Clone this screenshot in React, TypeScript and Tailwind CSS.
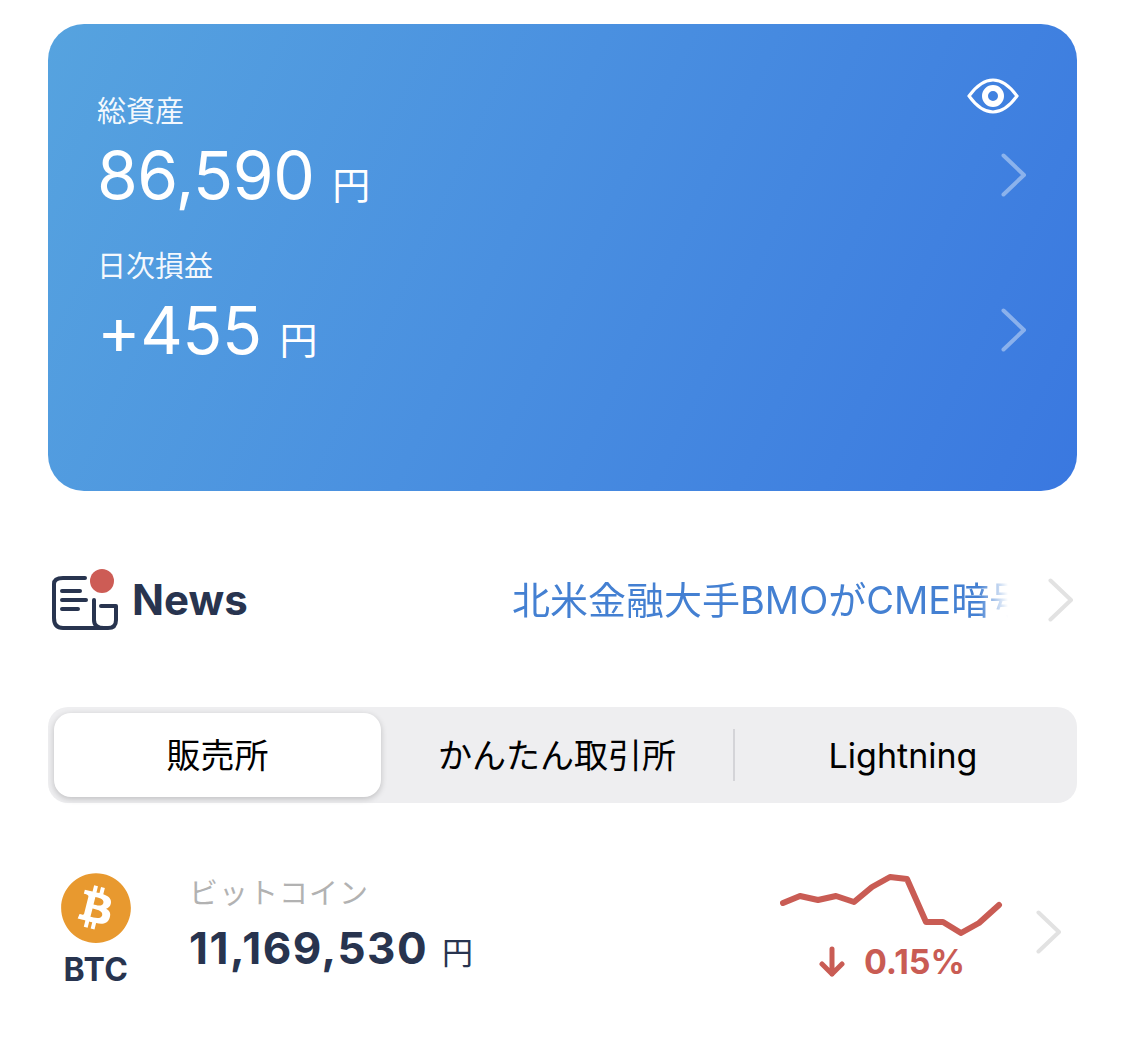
import { FaBitcoin } from "react-icons/fa";

const jp = { fontFamily: '"Inter", "Noto Sans CJK JP", sans-serif' };

function Chevron({ className }: { className: string }) {
  return (
    <svg viewBox="0 0 26 44" fill="none" className={className}>
      <path d="M2.5 2.5 L23 22 L2.5 41.5" stroke="currentColor" strokeWidth="4" strokeLinecap="round" strokeLinejoin="round" />
    </svg>
  );
}

function Balance({ label, value, gap }: { label: string; value: string; gap: string }) {
  return (
    <div className={`flex flex-col ${gap}`}>
      <div className="text-[29px] leading-[40px] text-white/95">{label}</div>
      <div className="flex items-center justify-between pr-[50px]">
        <div className="flex items-baseline gap-[18px] text-white">
          <span className="text-[66px] leading-[70px] font-normal tracking-[-0.5px]">{value}</span>
          <span className="text-[38px] leading-[40px]">円</span>
        </div>
        <Chevron className="w-[26px] h-[44px] text-white/40" />
      </div>
    </div>
  );
}

export default function App() {
  return (
    <div style={jp} className="w-[1125px] h-[1064px] bg-white overflow-hidden pt-[24px] px-[48px]">
      <div className="relative w-[1029px] h-[467px] rounded-[36px] bg-[linear-gradient(115deg,#56a3df_0%,#4a90e0_45%,#3a78e0_100%)] pl-[49px] pt-[68px] flex flex-col gap-[37px]">
        <svg viewBox="0 0 52 36" fill="none" className="absolute right-[58px] top-[54px] w-[52px] h-[36px]">
          <path d="M2 18 C10 7 18 2 26 2 C34 2 42 7 50 18 C42 29 34 34 26 34 C18 34 10 29 2 18 Z" stroke="white" strokeWidth="3" />
          <circle cx="26" cy="18" r="8" stroke="white" strokeWidth="6" />
        </svg>
        <Balance label="総資産" value="86,590" gap="gap-[8px]" />
        <Balance label="日次損益" value="+455" gap="gap-[8px]" />
      </div>

      <div className="flex items-center h-[64px] mt-[77px] pl-[4px] pr-[3px]">
        <div className="relative w-[66px] h-[64px] shrink-0">
          <svg viewBox="0 0 66 64" fill="none" className="absolute inset-0 w-[66px] h-[64px]">
            <path d="M33 10 H11 Q2 10 2 16 V50 Q2 60 11 60 H56 Q64 60 64 52 V38 H49 M42 32 V52 Q42 60 52 60" stroke="#28344f" strokeWidth="4" strokeLinecap="round" strokeLinejoin="round" />
            <path d="M10 23 H28 M10 32 H34 M10 41 H26" stroke="#28344f" strokeWidth="4" strokeLinecap="round" />
            <circle cx="50" cy="13" r="12" fill="#cd5c55" />
          </svg>
        </div>
        <span className="ml-[14px] text-[42px] leading-[48px] font-bold text-[#28344f]">News</span>
        <div className="ml-auto w-[496px] overflow-hidden whitespace-nowrap text-[38px] leading-[48px] text-[#4480d2] [mask-image:linear-gradient(to_right,black_94%,transparent_100%)]">
          北米金融大手BMOがCME暗号資産
        </div>
        <Chevron className="ml-[40px] w-[26px] h-[44px] text-[#e2e2e2]" />
      </div>

      <div className="mt-[75px] h-[96px] rounded-[20px] bg-[#eeeef0] p-[6px] flex items-center text-black text-[34px]">
        <div className="w-[327px] h-[84px] rounded-[17px] bg-white shadow-[0_2px_6px_rgba(0,0,0,0.2)] flex items-center justify-center">販売所</div>
        <div className="w-[352px] flex items-center justify-center">かんたん取引所</div>
        <div className="w-[2px] h-[52px] bg-[#d4d4d8]"></div>
        <div className="flex-1 flex items-center justify-center">Lightning</div>
      </div>

      <div className="flex mt-[69px] pl-[12px]">
        <div className="w-[72px] flex flex-col items-center shrink-0">
          <FaBitcoin className="w-[72px] h-[72px] text-[#e8992f]" />
          <div className="mt-[6px] text-[32px] leading-[40px] font-bold text-[#28344f] tracking-[0.5px]">BTC</div>
        </div>
        <div className="ml-[57px] flex flex-col">
          <div className="text-[29px] leading-[44px] text-[#b2b2b2] tracking-[1px]">ビットコイン</div>
          <div className="mt-[6px] flex items-baseline gap-[14px] text-[#28344f]">
            <span className="text-[44px] leading-[52px] font-bold tracking-[1.5px]">11,169,530</span>
            <span className="text-[31px] leading-[40px]">円</span>
          </div>
        </div>
        <div className="ml-auto flex flex-col items-center w-[224px]">
          <svg viewBox="0 0 224 64" fill="none" className="w-[224px] h-[64px]">
            <path d="M3 31 L20 24 L38 28 L56 24 L74 30 L92 15 L110 5 L127 7 L146 50 L163 50 L181 61 L199 51 L219 33" stroke="#c95c54" strokeWidth="6" strokeLinecap="round" strokeLinejoin="round" />
          </svg>
          <div className="mt-[6px] flex items-center gap-[19px] text-[#c95c54]">
            <svg viewBox="0 0 26 32" fill="none" className="w-[26px] h-[32px]">
              <path d="M13 3 V28 M3 18 L13 28 L23 18" stroke="currentColor" strokeWidth="5" strokeLinecap="round" strokeLinejoin="round" />
            </svg>
            <span className="text-[34px] leading-[40px] font-bold">0.15%</span>
          </div>
        </div>
        <Chevron className="ml-[32px] mr-[15px] mt-[38px] w-[26px] h-[44px] text-[#e2e2e2]" />
      </div>
    </div>
  );
}
